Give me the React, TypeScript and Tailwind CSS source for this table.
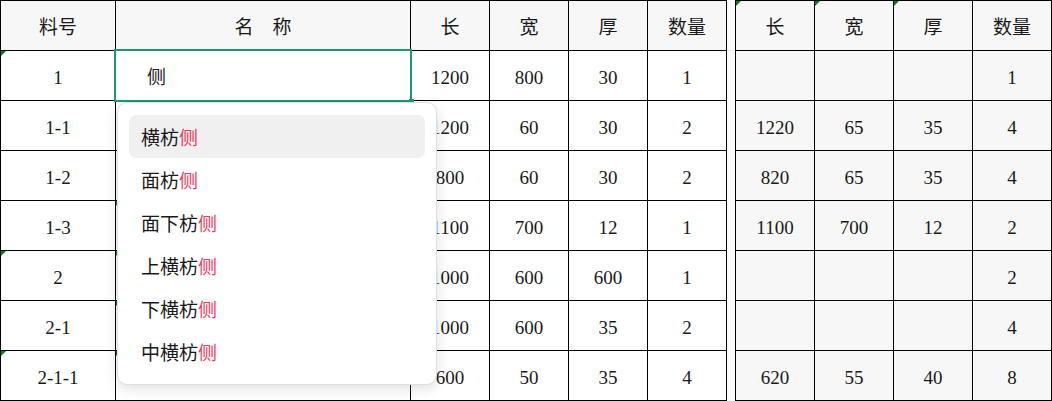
const font = { fontFamily: '"Liberation Serif", "Noto Sans CJK SC", serif' };

type Row = { no: string; name: string; a: string[]; b: string[]; markNo?: boolean; markName?: boolean };

const rows: Row[] = [
  { no: "1", name: "侧", a: ["1200", "800", "30", "1"], b: ["", "", "", "1"], markNo: true },
  { no: "1-1", name: "", a: ["1200", "60", "30", "2"], b: ["1220", "65", "35", "4"] },
  { no: "1-2", name: "", a: ["800", "60", "30", "2"], b: ["820", "65", "35", "4"] },
  { no: "1-3", name: "", a: ["1100", "700", "12", "1"], b: ["1100", "700", "12", "2"], markName: true },
  { no: "2", name: "", a: ["1000", "600", "600", "1"], b: ["", "", "", "2"], markNo: true, markName: true },
  { no: "2-1", name: "", a: ["1000", "600", "35", "2"], b: ["", "", "", "4"], markName: true },
  { no: "2-1-1", name: "", a: ["600", "50", "35", "4"], b: ["620", "55", "40", "8"], markNo: true, markName: true },
];

const options = ["横枋", "面枋", "面下枋", "上横枋", "下横枋", "中横枋"];

function Mark() {
  return (
    <span className="absolute left-0 top-0 h-0 w-0 border-r-[5px] border-t-[5px] border-r-transparent border-t-[#0b7a16]" />
  );
}

function Cell({ children, className = "", mark = false }: { children?: React.ReactNode; className?: string; mark?: boolean }) {
  return (
    <div className={`relative flex items-center justify-center pt-[5px] text-[19px] text-[#1a1a1a] ${className}`}>
      {mark && <Mark />}
      {children}
    </div>
  );
}

export default function App() {
  return (
    <div className="relative flex h-[401px] w-[1052px] overflow-hidden bg-[#f7f7f7]" style={font}>
      {/* left table */}
      <div className="grid w-[727px] shrink-0 grid-cols-[114px_294px_78px_78px_78px_78px] grid-rows-[repeat(8,49px)] gap-px bg-black p-px">
        <Cell className="bg-[#f7f7f7]">料号</Cell>
        <Cell className="bg-[#f7f7f7]">名　称</Cell>
        <Cell className="bg-[#f7f7f7]">长</Cell>
        <Cell className="bg-[#f7f7f7]">宽</Cell>
        <Cell className="bg-[#f7f7f7]">厚</Cell>
        <Cell className="bg-[#f7f7f7]">数量</Cell>
        {rows.map((r, i) => (
          <div key={r.no} className="contents">
            <Cell className="bg-white" mark={r.markNo}>{r.no}</Cell>
            <Cell className={`justify-start bg-white pl-[31px] ${i === 0 ? "z-10" : ""}`} mark={r.markName}>
              {r.name}
              {i === 0 && (
                <>
                  <span className="absolute -inset-[2px] border-2 border-[#1c9a6c]" />
                  <span className="absolute -bottom-[4px] -right-[4px] h-[5px] w-[5px] bg-[#1c9a6c]" />
                </>
              )}
            </Cell>
            {r.a.map((v, j) => (
              <Cell key={j} className="bg-white">{v}</Cell>
            ))}
          </div>
        ))}
      </div>

      {/* gap */}
      <div className="w-[8px] shrink-0 bg-[#fafafa]">
        <div className="mt-[50px] h-px bg-[#e6e6e6]" />
      </div>

      {/* right table */}
      <div className="grid w-[317px] shrink-0 grid-cols-[repeat(4,78px)] grid-rows-[repeat(8,49px)] gap-px bg-black p-px">
        <Cell className="bg-[#f7f7f7]" mark>长</Cell>
        <Cell className="bg-[#f7f7f7]" mark>宽</Cell>
        <Cell className="bg-[#f7f7f7]" mark>厚</Cell>
        <Cell className="bg-[#f7f7f7]">数量</Cell>
        {rows.map((r) =>
          r.b.map((v, j) => (
            <Cell key={r.no + j} className="bg-[#f7f7f7]">{v}</Cell>
          ))
        )}
      </div>

      {/* dropdown */}
      <div className="absolute left-[117px] top-[102px] z-20 flex h-[283px] w-[320px] flex-col rounded-[10px] border border-[#dedede] bg-white px-[11px] pt-[12px] shadow-[0_4px_14px_rgba(0,0,0,0.12)]">
        {options.map((o, i) => (
          <div
            key={o}
            className={`flex h-[43px] items-center rounded-[7px] px-[12px] pt-[2px] text-[19px] text-[#1a1a1a] ${i === 0 ? "bg-[#f0f0f0]" : ""}`}
            style={{ fontFamily: '"Noto Sans CJK SC", sans-serif' }}
          >
            {o}
            <span className="text-[#ec3a5c]">侧</span>
          </div>
        ))}
      </div>
    </div>
  );
}
